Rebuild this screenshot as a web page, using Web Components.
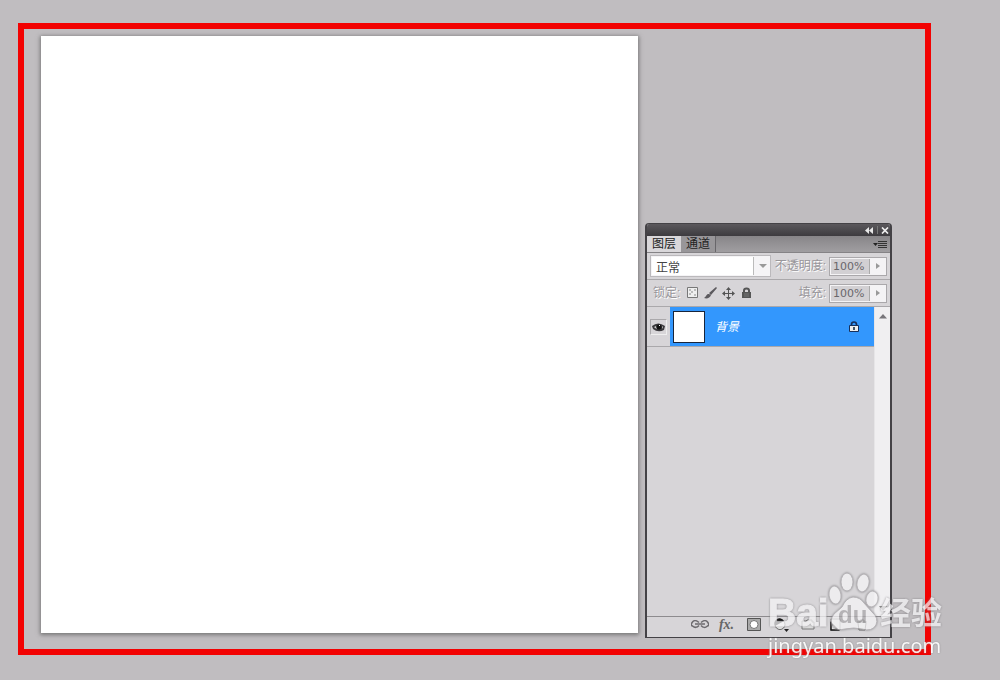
<!DOCTYPE html>
<html lang="zh-CN">
<head>
<meta charset="utf-8">
<title>图层</title>
<style>
html,body{margin:0;min-height:100%;background:#c0bdc0}
body{font:12px/16px "Liberation Sans","Noto Sans CJK SC",sans-serif;color:#333}
</style>
</head>
<body>
<work-space>
  <art-board></art-board>
  <layers-panel>
    <panel-tabs slot="tabs"></panel-tabs>
    <blend-options slot="options"></blend-options>
    <layer-row slot="layers">背景</layer-row>
    <panel-tools slot="tools"></panel-tools>
  </layers-panel>
  <site-mark slot="mark"></site-mark>
</work-space>
<script>
const define = (name, html) => {
  const t = document.createElement('template');
  t.innerHTML = '<style>:host,*{box-sizing:border-box}button{border:0;padding:0;margin:0;background:none;font:inherit;color:inherit;display:flex;align-items:center;justify-content:center}svg{display:block}</style>' + html;
  customElements.define(name, class extends HTMLElement {
    constructor() {
      super();
      this.attachShadow({mode: 'open'}).append(t.content.cloneNode(true));
    }
  });
};

define('work-space', `
<style>
:host{display:block;padding:23px 69px 25px 18px}
.frame{position:relative;display:flex;gap:7px;border:6px solid #f20202;padding:7px 33px 11px 17px}
</style>
<div class="frame"><slot></slot><slot name="mark"></slot></div>`);

define('art-board', `
<style>
:host{display:block;flex:1;align-self:flex-start;margin-bottom:5px;aspect-ratio:1;background:#fff;box-shadow:0 1px 4px 1px #777}
</style>`);

define('layers-panel', `
<style>
:host{display:flex;flex-direction:column;width:247px;height:415px;align-self:flex-end;border:1px solid #444246;border-left-width:2px;border-right-width:2px;border-radius:4px 4px 0 0;background:#d7d5d8;overflow:hidden}
header{display:flex;justify-content:flex-end;align-items:center;gap:3px;height:12px;padding-right:1px;background:linear-gradient(#5b585c,#3d3b3f);color:#eee}
header i{width:1px;height:8px;background:#777}
.list{flex:1;display:flex;min-height:0}
.rows{flex:1}
.bar{width:16px;padding-top:7px;background:#f0eff1;border-left:1px solid #e6e5e7;display:flex;flex-direction:column;justify-content:space-between;align-items:center;padding-bottom:5px}
</style>
<header>
<button aria-label="折叠"><svg width="9" height="7"><path d="M4 0v7L0 3.5zM8 0v7L4 3.5z" fill="#e8e8e8"/></svg></button><i></i>
<button aria-label="关闭"><svg width="8" height="7"><path d="M1 .5l6 6M7 .5l-6 6" stroke="#eee" stroke-width="1.7"/></svg></button>
</header>
<slot name="tabs"></slot>
<slot name="options"></slot>
<div class="list"><div class="rows"><slot name="layers"></slot></div>
<div class="bar"><button aria-label="向上"><svg width="8" height="5"><path d="M0 4.5L4 0l4 4.5z" fill="#77757a"/></svg></button><button aria-label="向下"><svg width="8" height="5"><path d="M0 0h8L4 5z" fill="#888"/></svg></button></div></div>
<slot name="tools"></slot>`);

define('panel-tabs', `
<style>
:host{display:flex;height:17px;background:linear-gradient(#878588,#a09ea1);border-bottom:1px solid #858386}
button{width:35px;height:16px;border-right:1px solid #68666a;color:#222;font-size:12px;line-height:18px;background:#989699}
.on{width:34px;border-right:0;background:#d9d7da}
.menu{width:20px;margin-left:auto;border:0;background:none}
</style>
<button class="on">图层</button><button>通道</button>
<button class="menu" aria-label="菜单"><svg width="14" height="9"><path d="M0 3h5L2.500 6z" fill="#222"/><path d="M5 1.500h9M5 3.500h9M5 5.500h9M5 7.500h9" stroke="#333"/></svg></button>`);

define('blend-options', `
<style>
:host{display:block;color:#99979b;text-shadow:1px 1px #fff}
div{display:flex;align-items:center;height:27px;border-bottom:1px solid #aaa8ab;padding:0 3px}
.mode{position:relative;width:121px;height:22px;border:1px solid #bbb9bc;background:#f5f4f6}
select{appearance:none;width:102px;height:18px;margin:1px;padding:0 4px;border:0;border-right:1px solid #bbb;border-radius:0;background:#fff;color:#444;font:12px/20px "Noto Sans CJK SC",sans-serif;display:block}
.mode svg{position:absolute;right:3px;top:8px}
label{margin-left:auto;margin-right:3px;white-space:nowrap}
.field{display:flex;width:58px;height:19px;border:1px solid #aaa8ab;background:#f4f3f5;padding:1px}
input{width:39px;min-width:0;border:0;border-right:1px solid #aaa;border-radius:0;padding:0 2px;background:#d2d0d3;color:#69676b;font:11px/15px "DejaVu Sans",sans-serif}
.field button{flex:1}
.locks{display:flex;gap:5px;margin-left:6px}
.lock{margin:0 0 0 3px}
</style>
<div><span class="mode"><select aria-label="混合模式"><option>正常</option></select><svg width="8" height="5"><path d="M0 0h8L4 4z" fill="#999"/></svg></span>
<label for="o">不透明度:</label><span class="field"><input id="o" value="100%"><button aria-label="不透明度滑块"><svg width="4" height="6"><path d="M0 0l4 3-4 3z" fill="#999"/></svg></button></span></div>
<div><span class="lock">锁定:</span><span class="locks">
<button aria-label="锁定透明像素"><svg width="13" height="12"><path d="M1.500.5h10v10h-10z" fill="#eee" stroke="#777"/><path d="M3 2h2v2h2v2H5v2H3V6h2V4H3zM8 2h2v2H8zM8 7h2v2H8z" fill="#bbb"/></svg></button>
<button aria-label="锁定图像像素"><svg width="13" height="12"><path d="M12 0L5 6l2 2 6-7zM5 7C2 7 3 9 0 11c3 1 6 0 7-3z" fill="#5c5a5e"/></svg></button>
<button aria-label="锁定位置"><svg width="13" height="13"><path d="M6.500 1v11M1 6.500h11" stroke="#555"/><path d="M6.500 0l2.500 3H4zM6.500 13L4 10h5zM0 6.500L3 4v5zM13 6.500L10 4v5z" fill="#555"/></svg></button>
<button aria-label="锁定全部"><svg width="13" height="12"><path d="M4 6V3.500Q4 1.500 6.500 1.500T9 3.500V6" fill="none" stroke="#555" stroke-width="2"/><path d="M2 5h9v6H2z" fill="#555"/><path d="M4 7h5M4 9h5" stroke="#777"/></svg></button></span>
<label for="f">填充:</label><span class="field"><input id="f" value="100%"><button aria-label="填充滑块"><svg width="4" height="6"><path d="M0 0l4 3-4 3z" fill="#999"/></svg></button></span></div>`);

define('layer-row', `
<style>
:host{display:flex;height:40px;border-bottom:1px solid #aaa8ab}
.eye{width:23px;display:flex;align-items:center;justify-content:center}
.eye button{width:17px;height:16px;border:1px solid #aaa8ab;border-right-color:#eee;border-bottom-color:#eee}
.row{flex:1;display:flex;align-items:center;padding:0 15px 0 3px;background:#3397fd;color:#fff}
.thumb{width:32px;height:32px;border:1px solid #18253b;background:#fff}
.name{margin-left:10px;font-style:italic;flex:1}
</style>
<span class="eye"><button aria-label="可见性"><svg width="13" height="10"><path d="M0 4Q6-1 13 4l-1 4Q6 11 1 7z" fill="#3a393c"/><path d="M2 5l2-1 1 3-2-1zM10 4l1 1-1 2z" fill="#ccc"/><circle cx="7" cy="5" r="2.500" fill="#111"/><path d="M7 3h1v1H7z" fill="#fff"/></svg></button></span>
<div class="row"><span class="thumb"></span><span class="name"><slot></slot></span>
<svg width="10" height="11"><path d="M2.500 5V3.500Q2.500 1 5 1t2.500 2.500V5" fill="none" stroke="#17305b" stroke-width="1.700"/><path d="M.5 4.500h9v6h-9z" fill="#eee" stroke="#17305b"/><path d="M4 6h2v3H4z" fill="#456"/></svg></div>`);

define('panel-tools', `
<style>
:host{display:flex;align-items:center;height:21px;padding:0 2px 5px 39px;border-top:1px solid #8d8b8e;background:#d7d5d8}
button{width:27px;height:15px}
.fx{font:italic bold 14px/14px "Liberation Serif",serif;color:#666}
</style>
<button aria-label="链接图层"><svg width="18" height="9"><path d="M8 2.500Q4-1 1.500 2t0 4Q5 9 8 5.500M10 2.500Q14-1 16.500 2t0 4Q13 9 10 5.500M4 4h10" fill="none" stroke="#6d6b6f" stroke-width="1.500"/></svg></button>
<button class="fx" aria-label="图层样式">fx.</button>
<button aria-label="图层蒙版"><svg width="14" height="13"><path d="M.5.5h13v12H.5z" fill="#aaa" stroke="#555"/><circle cx="7" cy="6.500" r="4" fill="#fff" stroke="#777"/></svg></button>
<button aria-label="调整图层"><svg width="17" height="14"><circle cx="8" cy="6.500" r="5" fill="#eee" stroke="#666"/><path d="M3 8a5 5 0 0 1 9-5z" fill="#111"/><path d="M12 11h5l-2.500 3z" fill="#222"/></svg></button>
<button aria-label="新建组"><svg width="14" height="11"><path d="M1 10V2h4l1-1h5v2h2v7z" fill="#ddd" stroke="#777"/></svg></button>
<button aria-label="新建图层"><svg width="14" height="13"><path d="M3 1h9v11H3z" fill="#ddd" stroke="#888"/><path d="M3 5v7h7zM3 5l4 4" fill="#eee" stroke="#111" stroke-width="1.500"/></svg></button>
<button aria-label="删除图层"><svg width="12" height="12"><path d="M1 3h10M2 4l1 7h6l1-7M4 3V1h4v2" fill="#ddd" stroke="#666"/></svg></button>`);

define('site-mark', `
<style>
:host{position:absolute;right:-19px;bottom:-10px;width:176px;color:#f4f3f5;pointer-events:none}
.brand{display:flex;height:64px;align-items:flex-end;opacity:.74;filter:drop-shadow(0 0 1px #777579)}
.bai{font:bold 39px/40px "Liberation Sans",sans-serif;width:60px;white-space:nowrap;-webkit-text-stroke:1px #f4f3f5}
.paw{position:relative;width:52px;height:64px;flex:none}
.du{position:absolute;left:10px;top:30px;font:bold 24px/32px "Liberation Sans",sans-serif;color:#aaa8ab}
.cn{font:bold 31px/38px "Liberation Sans","Noto Sans CJK SC",sans-serif;white-space:nowrap}
a{display:block;font:20px/26px "Noto Sans",sans-serif;color:#fff;text-decoration:none;text-shadow:0 0 2px #888;white-space:nowrap;opacity:.9}
</style>
<div class="brand"><span class="bai">Bai</span><span class="paw"><svg width="52" height="64" viewBox="0 0 52 64"><g fill="#f5f4f6" stroke="#aaa8ab"><ellipse cx="7" cy="26" rx="6" ry="9" transform="rotate(-8 7 26)"/><ellipse cx="19" cy="13" rx="6" ry="9"/><ellipse cx="35" cy="14" rx="6" ry="9" transform="rotate(12 35 14)"/><ellipse cx="44" cy="30" rx="6" ry="8" transform="rotate(12 44 30)"/><path d="M25 28Q18 29 14 38L6 45Q1 51 5 58Q9 62 17 60q9-2 17 0 10 3 14-4 3-7-4-13L36 34Q32 28 25 28z"/></g></svg><span class="du">du</span></span><span class="cn">经验</span></div>
<a href="#">jingyan.baidu.com</a>`);
</script>
</body>
</html>
